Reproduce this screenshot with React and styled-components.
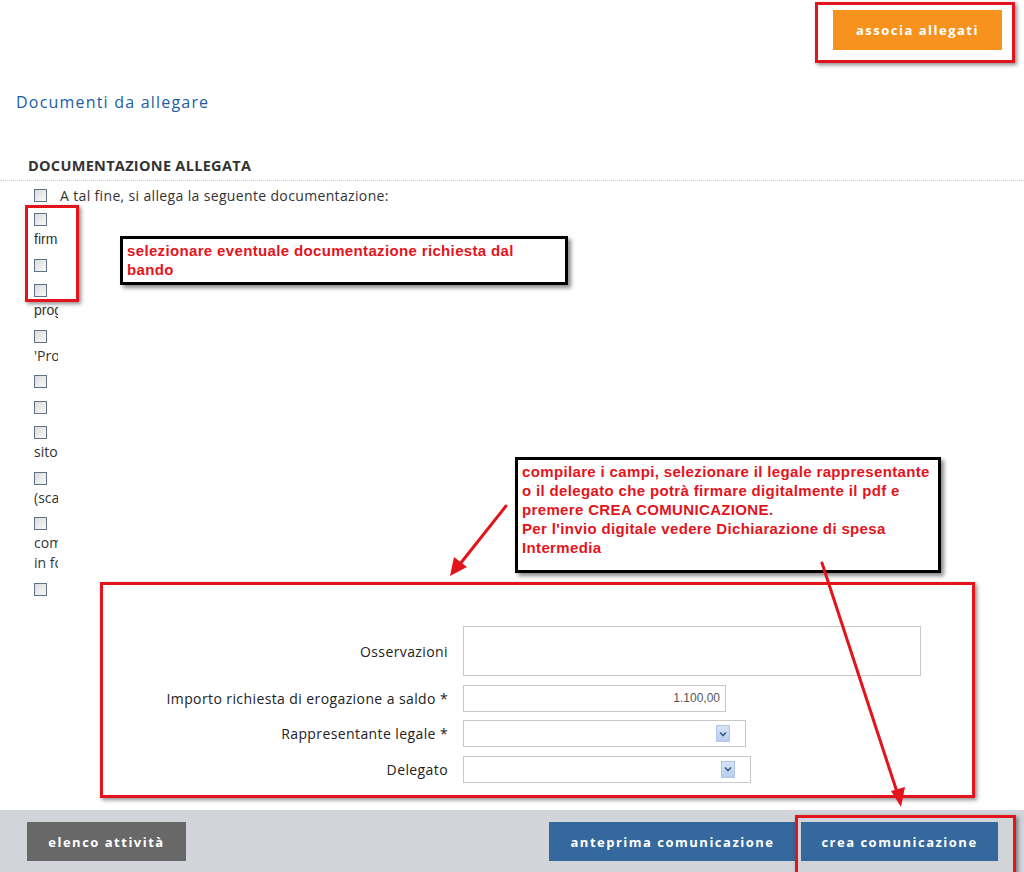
import React from "react";
import styled, { createGlobalStyle } from "styled-components";

const GlobalStyle = createGlobalStyle`
  html, body { margin: 0; padding: 0; background: #fff; }
  body { font-family: "Open Sans", "Liberation Sans", Arial, sans-serif; color: #333; }
  * { box-sizing: border-box; }
`;

const RED = "#e3141c";

const Page = styled.div`
  position: relative;
  width: 1024px;
  height: 872px;
  overflow: hidden;
  display: flex;
  flex-direction: column;
`;

const TopBar = styled.div`
  display: flex;
  justify-content: flex-end;
  padding: 2px 9px 0 0;
`;

const Highlight = styled.div`
  border: 3px solid ${RED};
  box-shadow: 2px 2px 4px rgba(0, 0, 0, 0.45);
  padding: ${(p) => p.$pad || "0"};
`;

const Button = styled.button`
  border: none;
  outline: none;
  height: ${(p) => p.$h || 39}px;
  width: ${(p) => p.$w}px;
  background: ${(p) => p.$bg};
  color: #fff;
  font-family: "Open Sans", "Liberation Sans", sans-serif;
  font-weight: 700;
  font-size: 13px;
  letter-spacing: 1.5px;
  cursor: pointer;
  padding: 0;
`;

const Title = styled.h2`
  margin: 29px 0 0 16px;
  font-size: 16px;
  line-height: 20px;
  font-weight: 400;
  letter-spacing: 1.2px;
  color: #1b5ca8;
`;

const SectionHeader = styled.h3`
  margin: 44px 0 0;
  padding: 0 0 4px 28px;
  font-size: 14.5px;
  line-height: 20px;
  font-weight: 700;
  letter-spacing: 0.3px;
  color: #333;
  border-bottom: 1px dotted #c8c8c8;
`;

const Check = styled.input.attrs({ type: "checkbox" })`
  appearance: none;
  -webkit-appearance: none;
  margin: 0 0 3px;
  width: 13px;
  height: 13px;
  border: 1px solid #5f7286;
  background: linear-gradient(135deg, #dcdcdc, #f8f8f8);
  display: block;
  flex: none;
`;

const IntroRow = styled.label`
  display: flex;
  align-items: center;
  gap: 13px;
  height: 20px;
  margin: 4px 0 0 34px;
  font-size: 14px;
  letter-spacing: 0.35px;
  color: #333;

  ${Check} {
    margin: 0;
  }
`;

const DocList = styled.div`
  margin: 8px 0 0 34px;
  width: 24px;
  display: flex;
  flex-direction: column;
`;

const DocItem = styled.div`
  display: flex;
  flex-direction: column;
  margin-bottom: 9.5px;
`;

const DocText = styled.div`
  width: 24px;
  overflow: hidden;
  white-space: nowrap;
  font-size: 14px;
  line-height: 20px;
  color: #333;
  font-family: ${(p) => (p.$arial ? '"Liberation Sans", Arial, sans-serif' : '"Open Sans", sans-serif')};
`;

const Form = styled.div`
  margin-top: 18px;
  display: grid;
  grid-template-columns: 448px auto;
  column-gap: 15px;
  row-gap: 8.5px;
  justify-content: start;
`;

const Label = styled.label`
  text-align: right;
  align-self: center;
  font-size: 14px;
  letter-spacing: 0.4px;
  color: #222;
`;

const TextArea = styled.textarea`
  width: 458px;
  height: 50px;
  border: 1px solid #c8c8c8;
  resize: none;
  margin: 0;
  display: block;
`;

const Input = styled.input`
  width: ${(p) => p.$w}px;
  height: 27px;
  border: 1px solid #c8c8c8;
  margin: 0;
  padding: 0 5px;
  text-align: right;
  font-family: "Liberation Sans", Arial, sans-serif;
  font-size: 12px;
  color: #555;
`;

const SelectBox = styled.div`
  width: ${(p) => p.$w}px;
  height: 27px;
  border: 1px solid #c8c8c8;
  background: #fff;
  display: flex;
  justify-content: flex-end;
  align-items: center;
  padding-right: ${(p) => p.$pr}px;
`;

const SelectArrow = styled.span`
  width: 14px;
  height: 17px;
  background: linear-gradient(#d6e2f7, #b9cdef);
  border: 1px solid #b4c6e6;
  display: flex;
  align-items: center;
  justify-content: center;
`;

const Footer = styled.div`
  margin-top: auto;
  height: 62px;
  background: #d1d4d9;
  display: flex;
  align-items: flex-start;
  padding: 12px 26px 0 27px;
  gap: 5px;
`;

const Spacer = styled.div`
  flex: 1;
`;

const Overlay = styled.div`
  position: absolute;
  left: ${(p) => p.$x}px;
  top: ${(p) => p.$y}px;
  width: ${(p) => p.$w}px;
  height: ${(p) => p.$h}px;
  pointer-events: none;
`;

const RedBox = styled(Overlay)`
  border: 3px solid ${RED};
  box-shadow: 2px 2px 4px rgba(0, 0, 0, 0.45);
`;

const Callout = styled(Overlay)`
  background: #fff;
  border: 3px solid #000;
  box-shadow: 3px 3px 4px rgba(0, 0, 0, 0.45);
  padding: 2px 4px;
  font-family: "Liberation Sans", Arial, sans-serif;
  font-weight: 700;
  font-size: 15px;
  letter-spacing: 0.35px;
  line-height: 19px;
  white-space: nowrap;
  color: ${RED};
`;

const Arrows = styled.svg`
  position: absolute;
  left: 0;
  top: 0;
  pointer-events: none;
`;

function Chevron() {
  return (
    <svg width="8" height="6" viewBox="0 0 8 6">
      <path d="M1 1.5 L4 4.5 L7 1.5" stroke="#3d5a8a" strokeWidth="1.6" fill="none" />
    </svg>
  );
}

const docs = [
  ["firma digitale"],
  [],
  ["progetto"],
  ["'Progetto'"],
  [],
  [],
  ["sito web"],
  ["(scansione)"],
  ["comunicazione", "in formato pdf"],
  [],
];

export default function App() {
  return (
    <Page>
      <GlobalStyle />
      <TopBar>
        <Highlight $pad="5px 10px 10px 15px">
          <Button $bg="#f7921e" $w={169} $h={40}>associa allegati</Button>
        </Highlight>
      </TopBar>

      <Title>Documenti da allegare</Title>
      <SectionHeader>DOCUMENTAZIONE ALLEGATA</SectionHeader>

      <IntroRow>
        <Check />
        A tal fine, si allega la seguente documentazione:
      </IntroRow>

      <DocList>
        {docs.map((lines, i) => (
          <DocItem key={i}>
            <Check />
            {lines.length > 0 && (
              <div>
                {lines.map((t) => (
                  <DocText key={t} $arial={i < 3}>{t}</DocText>
                ))}
              </div>
            )}
          </DocItem>
        ))}
      </DocList>

      <Form>
        <Label>Osservazioni</Label>
        <TextArea />
        <Label>Importo richiesta di erogazione a saldo *</Label>
        <Input $w={263} defaultValue="1.100,00" />
        <Label>Rappresentante legale *</Label>
        <SelectBox $w={283} $pr={15}>
          <SelectArrow><Chevron /></SelectArrow>
        </SelectBox>
        <Label>Delegato</Label>
        <SelectBox $w={288} $pr={15}>
          <SelectArrow><Chevron /></SelectArrow>
        </SelectBox>
      </Form>

      <Footer>
        <Button $bg="#686868" $w={159}>elenco attività</Button>
        <Spacer />
        <Button $bg="#35689d" $w={247}>anteprima comunicazione</Button>
        <Button $bg="#35689d" $w={197}>crea comunicazione</Button>
      </Footer>

      <RedBox $x={25} $y={205} $w={54} $h={97} />
      <RedBox $x={100} $y={582} $w={875} $h={216} />
      <RedBox $x={795} $y={815} $w={221} $h={62} />

      <Callout $x={120} $y={236} $w={448} $h={49}>
        selezionare eventuale documentazione richiesta dal
        <br />
        bando
      </Callout>
      <Callout $x={515} $y={457} $w={426} $h={116}>
        compilare i campi, selezionare il legale rappresentante
        <br />
        o il delegato che potrà firmare digitalmente il pdf e
        <br />
        premere CREA COMUNICAZIONE.
        <br />
        Per l'invio digitale vedere Dichiarazione di spesa
        <br />
        Intermedia
      </Callout>

      <Arrows width="1024" height="872" viewBox="0 0 1024 872">
        <g stroke={RED} strokeWidth="3" fill="none" strokeLinecap="round">
          <line x1="506" y1="506" x2="460" y2="564" />
          <line x1="822" y1="563" x2="898" y2="795" />
        </g>
        <g fill={RED}>
          <polygon points="450,576 454,557 467,567" />
          <polygon points="901,807 891,791 905,787" />
        </g>
      </Arrows>
    </Page>
  );
}
